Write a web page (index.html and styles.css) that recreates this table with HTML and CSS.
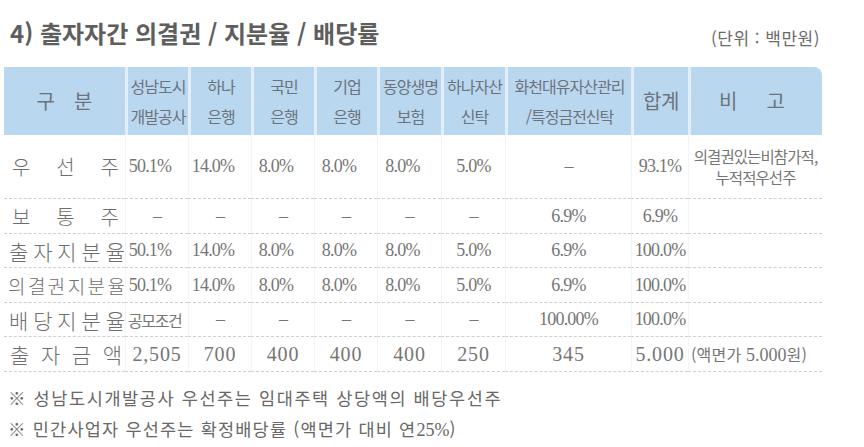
FILE: index.html
```html
<!DOCTYPE html>
<html lang="ko">
<head>
<meta charset="utf-8">
<title>출자자간 의결권 / 지분율 / 배당률</title>
<link rel="stylesheet" href="styles.css">
</head>
<body>
<div class="page">
  <div class="head">
    <h2 class="title">4) 출자자간 의결권 / 지분율 / 배당률</h2>
    <span class="unit">(단위 : 백만원)</span>
  </div>
  <table class="tbl">
    <colgroup>
      <col class="c0"><col class="cb"><col class="cb"><col class="cb"><col class="cb"><col class="cw"><col class="cw"><col class="c7"><col class="c8"><col class="c9">
    </colgroup>
    <thead>
      <tr class="hrow">
        <th class="h-gubun">구분</th>
        <th>성남도시<br>개발공사</th>
        <th>하나<br>은행</th>
        <th>국민<br>은행</th>
        <th>기업<br>은행</th>
        <th>동양생명<br>보험</th>
        <th>하나자산<br>신탁</th>
        <th>화천대유자산관리<br>/특정금전신탁</th>
        <th class="h-sum">합계</th>
        <th class="h-bigo">비고</th>
      </tr>
    </thead>
    <tbody>
      <tr class="r1">
        <td><div class="lbl lbl-wide"><span>우</span><span>선</span><span>주</span></div></td>
        <td class="sh">50.1%</td>
        <td class="sh">14.0%</td>
        <td class="sh">8.0%</td>
        <td class="sh">8.0%</td>
        <td class="sh">8.0%</td>
        <td>5.0%</td>
        <td>–</td>
        <td>93.1%</td>
        <td class="rem">의결권있는비참가적,<br>누적적우선주</td>
      </tr>
      <tr class="ra">
        <td><div class="lbl lbl-wide"><span>보</span><span>통</span><span>주</span></div></td>
        <td>–</td>
        <td>–</td>
        <td>–</td>
        <td>–</td>
        <td>–</td>
        <td>–</td>
        <td>6.9%</td>
        <td>6.9%</td>
        <td></td>
      </tr>
      <tr class="rb">
        <td><div class="lbl lbl-tight"><span>출</span><span>자</span><span>지</span><span>분</span><span>율</span></div></td>
        <td class="sh">50.1%</td>
        <td class="sh">14.0%</td>
        <td class="sh">8.0%</td>
        <td class="sh">8.0%</td>
        <td class="sh">8.0%</td>
        <td>5.0%</td>
        <td>6.9%</td>
        <td>100.0%</td>
        <td></td>
      </tr>
      <tr class="ra">
        <td><div class="lbl lbl-six"><span>의</span><span>결</span><span>권</span><span>지</span><span>분</span><span>율</span></div></td>
        <td class="sh">50.1%</td>
        <td class="sh">14.0%</td>
        <td class="sh">8.0%</td>
        <td class="sh">8.0%</td>
        <td class="sh">8.0%</td>
        <td>5.0%</td>
        <td>6.9%</td>
        <td>100.0%</td>
        <td></td>
      </tr>
      <tr class="rb">
        <td><div class="lbl lbl-tight"><span>배</span><span>당</span><span>지</span><span>분</span><span>율</span></div></td>
        <td class="kor">공모조건</td>
        <td>–</td>
        <td>–</td>
        <td>–</td>
        <td>–</td>
        <td>–</td>
        <td>100.00%</td>
        <td>100.0%</td>
        <td></td>
      </tr>
      <tr class="ra amt">
        <td><div class="lbl lbl-four"><span>출</span><span>자</span><span>금</span><span>액</span></div></td>
        <td>2,505</td>
        <td>700</td>
        <td>400</td>
        <td>400</td>
        <td>400</td>
        <td>250</td>
        <td>345</td>
        <td>5.000</td>
        <td class="face">(액면가 <span class="num">5.000</span>원)</td>
      </tr>
    </tbody>
  </table>
  <div class="notes">
    <p class="note1">※ 성남도시개발공사 우선주는 임대주택 상당액의 배당우선주</p>
    <p class="note2">※ 민간사업자 우선주는 확정배당률 (액면가 대비 연<span class="num">25%</span>)</p>
  </div>
</div>
</body>
</html>
```

FILE: styles.css
```css
* { box-sizing: border-box; }

body {
  margin: 0;
  background: #ffffff;
  font-family: "Noto Sans CJK KR", "Noto Sans", sans-serif;
  color: #707070;
}

.page {
  width: 864px;
  height: 447px;
  padding-left: 4px;
  overflow: hidden;
}

.head {
  display: flex;
  justify-content: space-between;
  align-items: flex-start;
  width: 818px;
  height: 67px;
}

.title {
  margin: 18px 0 0 6px;
  font-size: 24px;
  line-height: 30px;
  font-weight: 700;
  color: #5e5e5e;
}

.unit {
  margin: 27px 2px 0 0;
  font-size: 17px;
  line-height: 22px;
  letter-spacing: 0.5px;
  color: #6b6b6b;
}

.tbl {
  width: 818px;
  border-collapse: separate;
  border-spacing: 0;
  table-layout: fixed;
}

.c0 { width: 121px; }
.cb { width: 63px; }
.cw { width: 64px; }
.c7 { width: 126px; }
.c8 { width: 57px; }
.c9 { width: 134px; }

.hrow { height: 68px; }

.tbl th {
  padding: 0;
  background: #bad7f0;
  font-weight: 400;
  font-size: 16px;
  line-height: 30px;
  letter-spacing: -1px;
  color: #6c737b;
  white-space: nowrap;
  text-align: center;
  vertical-align: middle;
}

.tbl th + th { border-left: 3px solid #e3eef8; }
.tbl th:last-child { border-top-right-radius: 8px; }

.tbl .h-gubun {
  font-size: 20px;
  letter-spacing: 19px;
  padding-left: 19px;
}

.tbl .h-sum {
  font-size: 20px;
  letter-spacing: -0.5px;
}

.tbl .h-bigo {
  font-size: 20px;
  letter-spacing: 29px;
  padding-left: 20px;
}

.r1 { height: 64px; }
.ra { height: 35px; }
.rb { height: 34px; }

.tbl td {
  padding: 0;
  text-align: center;
  vertical-align: middle;
  white-space: nowrap;
  border-bottom: 1px dashed #cfcfcf;
  font-family: "Liberation Serif", serif;
  font-size: 18px;
  letter-spacing: -0.8px;
  color: #767676;
}

.tbl td + td { border-left: 1px solid #f4f4f4; }

.tbl .sh { padding-right: 14px; }

.lbl {
  display: flex;
  justify-content: space-between;
  padding: 0 3px 0 6px;
  font-family: "Noto Sans CJK KR", sans-serif;
  font-size: 20px;
  font-weight: 300;
  letter-spacing: 0;
  color: #6e6e6e;
}

.lbl-wide { padding: 0 6px 0 8px; }
.lbl-tight { padding: 0 0 0 5px; font-size: 21px; }
.lbl-four { padding: 0 3px 0 6px; font-size: 21px; }
.lbl-six { padding: 0 0 0 4px; font-size: 19px; }

.tbl .kor {
  font-family: "Noto Sans CJK KR", sans-serif;
  font-size: 16px;
  letter-spacing: -1.4px;
  text-align: left;
  padding-left: 2px;
}

.tbl .rem {
  font-family: "Noto Sans CJK KR", sans-serif;
  font-size: 15.5px;
  line-height: 21px;
  letter-spacing: -0.9px;
}

.amt td {
  font-size: 20px;
  letter-spacing: 0.8px;
}

.tbl .face {
  font-family: "Noto Sans CJK KR", sans-serif;
  font-size: 16px;
  letter-spacing: 0.2px;
  text-align: left;
  padding-left: 2px;
}

.face .num {
  font-family: "Liberation Serif", serif;
  font-size: 18px;
  letter-spacing: 0;
}

.notes {
  padding: 10px 0 0 4px;
  font-size: 17.5px;
  line-height: 31px;
  color: #686868;
}

.notes p { margin: 0; }
.note1 { letter-spacing: 1.6px; }
.note2 { letter-spacing: 1.2px; }

.notes .num {
  font-family: "Liberation Serif", serif;
  font-size: 18px;
  letter-spacing: 0;
}
```
